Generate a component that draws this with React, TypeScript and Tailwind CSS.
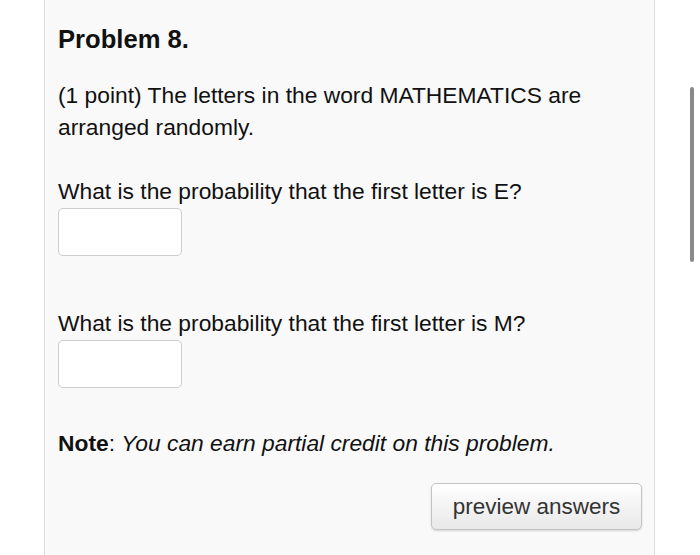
export default function App() {
  return (
    <div className="relative w-[700px] h-[555px] overflow-hidden bg-white" style={{ fontFamily: '"Liberation Sans", Arial, sans-serif' }}>
      <div className="ml-[44px] w-[611px] h-[555px] border-l border-r border-[#dcdcdc] bg-[#f9f9f9] pl-[13px] pr-[12px] text-[#111] flex flex-col">
        <h1 className="mt-[24px] text-[25.6px] leading-[30px] font-bold">Problem 8.</h1>
        <p className="mt-[25px] text-[22.8px] leading-[32px]">
          (1 point) The letters in the word MATHEMATICS are arranged randomly.
        </p>
        <p className="mt-[32px] text-[22.8px] leading-[32px]">What is the probability that the first letter is E?</p>
        <div className="mt-[1px] w-[124px] h-[48px] rounded-[5px] border border-[#cccccc] bg-white" />
        <p className="mt-[51px] text-[22.8px] leading-[32px]">What is the probability that the first letter is M?</p>
        <div className="mt-[1px] w-[124px] h-[48px] rounded-[5px] border border-[#cccccc] bg-white" />
        <p className="mt-[39px] text-[22.8px] leading-[32px]">
          <span className="font-bold">Note</span>: <i>You can earn partial credit on this problem.</i>
        </p>
        <div className="mt-[24px] flex justify-end">
          <button className="w-[211px] h-[47px] rounded-[5px] border border-[#c4c4c4] bg-gradient-to-b from-white to-[#e8e8e8] shadow-[0_1px_2px_rgba(0,0,0,0.15)] text-[22.5px] text-[#333]">
            preview answers
          </button>
        </div>
      </div>
      <div className="absolute left-[690px] top-[87px] w-[4px] h-[175px] rounded-full bg-[#8a8a8a]" />
    </div>
  );
}
